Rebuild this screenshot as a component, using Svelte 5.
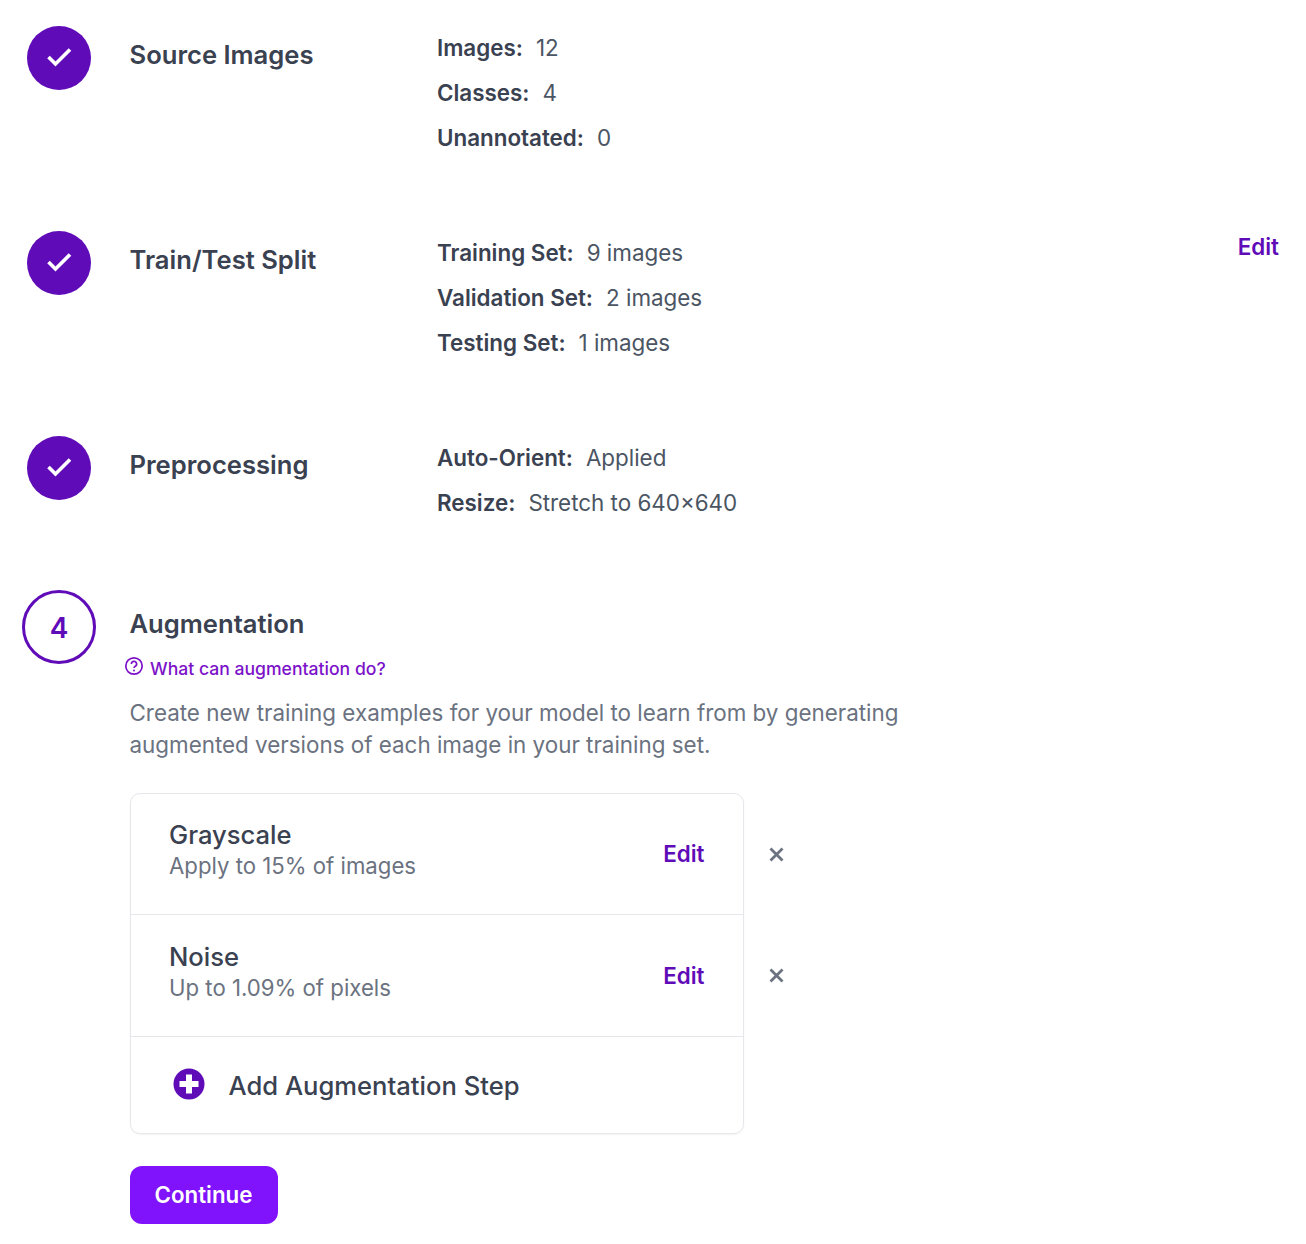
<script>
  const done = [
    {
      title: 'Source Images',
      height: 205,
      stats: [['Images:', '12'], ['Classes:', '4'], ['Unannotated:', '0']],
    },
    {
      title: 'Train/Test Split',
      height: 205,
      edit: true,
      stats: [['Training Set:', '9 images'], ['Validation Set:', '2 images'], ['Testing Set:', '1 images']],
    },
    {
      title: 'Preprocessing',
      height: 155,
      stats: [['Auto-Orient:', 'Applied'], ['Resize:', 'Stretch to 640×640']],
    },
  ];

  const steps = [
    { name: 'Grayscale', detail: 'Apply to 15% of images' },
    { name: 'Noise', detail: 'Up to 1.09% of pixels' },
  ];
</script>

<main class="page">
  {#each done as section (section.title)}
    <section class="step" style="height: {section.height}px">
      <div class="badge">
        <svg width="26" height="26" viewBox="0 0 26 26" fill="none" aria-hidden="true">
          <path d="M2.5 12l7 7L24 4.5" stroke="#fff" stroke-width="3.6" />
        </svg>
      </div>
      <h2>{section.title}</h2>
      <div class="stats">
        {#each section.stats as [label, value] (label)}
          <div class="stat"><b>{label}</b>{value}</div>
        {/each}
      </div>
      {#if section.edit}
        <a class="edit top-edit" href="#edit">Edit</a>
      {/if}
    </section>
  {/each}

  <section class="current">
    <div class="number">4</div>
    <div class="body">
      <h2>Augmentation</h2>
      <a class="help" href="#help">
        <svg width="20" height="20" viewBox="0 0 20 20" fill="none" aria-hidden="true">
          <circle cx="10" cy="10" r="8.2" stroke="#7c12c9" stroke-width="1.7" />
          <path d="M7.4 8a2.6 2.6 0 1 1 3.9 2.2c-.9.5-1.3 1-1.3 1.9" stroke="#7c12c9" stroke-width="1.7" />
          <circle cx="10" cy="14.4" r="1" fill="#7c12c9" />
        </svg>
        What can augmentation do?
      </a>
      <p>Create new training examples for your model to learn from by generating augmented versions of each image in your training set.</p>

      <div class="card">
        {#each steps as step (step.name)}
          <div class="row">
            <div class="info">
              <div class="name">{step.name}</div>
              <div class="detail">{step.detail}</div>
            </div>
            <a class="edit" href="#edit">Edit</a>
            <svg class="remove" width="15" height="15" viewBox="0 0 15 15" fill="none" aria-hidden="true">
              <path d="M1.5 1.5l12 12M13.5 1.5l-12 12" stroke="#6b7280" stroke-width="2.8" />
            </svg>
          </div>
        {/each}
        <div class="add">
          <svg width="32" height="32" viewBox="0 0 32 32" aria-hidden="true">
            <circle cx="16" cy="16" r="15.5" fill="#5f0bb8" />
            <path d="M16 6.5v19M6.5 16h19" stroke="#fff" stroke-width="6" />
          </svg>
          <span>Add Augmentation Step</span>
        </div>
      </div>

      <button type="button">Continue</button>
    </div>
  </section>
</main>

<style>
  :global(body) { background: #fff; }
  .page { width: 1306px; height: 1244px; padding-top: 26px; box-sizing: border-box;
          font-family: Inter, "Liberation Sans", sans-serif; color: #3b4252; overflow: hidden; }

  .step { display: flex; align-items: flex-start; padding-left: 27px; box-sizing: border-box; }
  .badge { width: 64px; height: 64px; border-radius: 50%; background: #5f0bb8; flex-shrink: 0;
           display: flex; align-items: center; justify-content: center; }
  h2 { margin: 0; font-size: 25.6px; line-height: 32px; font-weight: 600; color: #3a4150; }
  .step h2 { width: 307.5px; margin: 13px 0 0 38.5px; flex-shrink: 0; }
  .stats { display: flex; flex-direction: column; flex: 1; margin-top: -1px; }
  .stat { height: 45px; font-size: 22.4px; line-height: 45px; color: #4b5563; }
  .stat b { font-weight: 600; color: #3a4150; margin-right: 13px; }
  .edit { color: #5f0bb8; font-size: 22.4px; font-weight: 600; text-decoration: none; }
  .top-edit { margin: 2px 27px 0 0; }

  .current { display: flex; align-items: flex-start; padding-left: 22px; }
  .number { width: 74px; height: 74px; margin-top: -1px; padding-top: 2px; box-sizing: border-box; border: 3px solid #5f0bb8; border-radius: 50%;
            flex-shrink: 0; display: flex; align-items: center; justify-content: center;
            color: #5f0bb8; font-size: 28px; font-weight: 600; }
  .body { margin-left: 33.5px; width: 800px; padding-top: 17px; }
  .help { display: flex; align-items: center; gap: 6px; margin: 17px 0 0 -5.5px; color: #7c12c9;
          font-size: 17.6px; font-weight: 500; text-decoration: none; line-height: 24px; }
  .help svg { position: relative; top: -3px; }
  p { margin: 16px 0 0; width: 790px; font-size: 22.4px; line-height: 32px; color: #6b7280; }

  .card { width: 614px; margin-top: 32px; box-sizing: border-box; border: 1px solid #e5e7eb; border-radius: 10px;
          box-shadow: 0 1px 2px rgba(0, 0, 0, 0.05); }
  .row { height: 122px; box-sizing: border-box; border-bottom: 1px solid #e5e7eb; padding: 0 38px;
         display: flex; align-items: center; justify-content: space-between; position: relative; }
  .row:first-child { height: 121px; padding-bottom: 2px; }
  .info { padding-bottom: 7px; }
  .name { font-size: 25.6px; line-height: 32px; font-weight: 500; color: #3a4150; margin-left: 0.5px; }
  .detail { font-size: 22.2px; line-height: 30px; color: #6b7280; margin-left: 0.5px; }
  .remove { position: absolute; right: -41px; top: 53px; }
  .add { height: 96px; padding-left: 42px; display: flex; align-items: center; gap: 24px;
         font-size: 25.6px; font-weight: 500; color: #3a4150; }
  .add svg { position: relative; top: -1px; }
  button { display: block; margin-top: 32px; width: 148px; height: 58px; border: 0; border-radius: 12px; padding: 0 0 2px;
           background: #8013fb; color: #fff; font: 600 22.3px Inter, "Liberation Sans", sans-serif; }
</style>
